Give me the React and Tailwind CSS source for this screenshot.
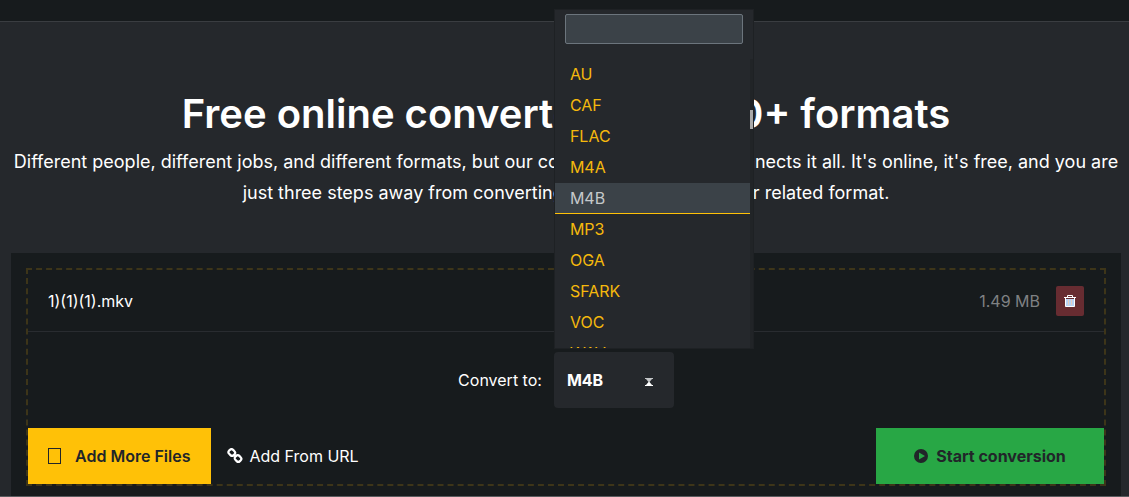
const formats = 'AU,CAF,FLAC,M4A,M4B,MP3,OGA,SFARK,VOC,WAV'.split(',');

function Hourglass() {
  return (
    <svg width="8" height="8" viewBox="0 0 8 8" aria-hidden="true">
      <path d="M0 0H8V1H7L4.500 4H3.500L1 1H0Z" fill="#c4c6c8" />
      <path d="M3.500 4H4.500L7 7H8V8H0V7H1Z" fill="#ffffff" />
    </svg>
  );
}

function TrashIcon() {
  return (
    <svg width="12" height="12" viewBox="0 0 12 12" aria-hidden="true">
      <path d="M3.500 2V0.5H8.500V2" fill="none" stroke="#fff" />
      <path d="M0 2H12V3H0Z" fill="#fff" />
      <path d="M1.500 3V11.500H10.500V3" fill="#b9d4f5" stroke="#fff" />
      <path d="M2 3.500H10" stroke="#672c31" />
      <path d="M4.500 4.500V10M7.500 4.500V10" stroke="#e6cfc0" />
    </svg>
  );
}

function LinkIcon() {
  return (
    <svg width="16" height="16" viewBox="0 0 16 16" fill="none" stroke="#fff" strokeWidth="2.2" aria-hidden="true">
      <rect x="1.600" y="1.700" width="6.400" height="5.600" rx="2.300" transform="rotate(45 4.800 4.500)" />
      <rect x="7.800" y="7.700" width="6.400" height="5.600" rx="2.300" transform="rotate(45 11 10.500)" />
      <path d="M6.500 6L9.500 9" />
    </svg>
  );
}

function PlayIcon() {
  return (
    <svg width="14" height="14" viewBox="0 0 14 14" aria-hidden="true">
      <path fillRule="evenodd" d="M7 0A7 7 0 1 0 7 14A7 7 0 1 0 7 0ZM5 3.500V10.500L11 7Z" fill="#212529" />
      <path d="M6.500 5.500V8.500L9 7Z" fill="#28a745" />
    </svg>
  );
}

function FormatMenu() {
  return (
    <div className="absolute bottom-full left-0 mb-[3px] w-[200px] border border-[#1e2124] bg-[#25282c]">
      <div className="px-[10px] pt-1">
        <input type="search" aria-label="Search formats" className="block h-[30px] w-full rounded-xs border border-[#6c757d] bg-[#3b4248] px-2 text-white outline-none" />
      </div>
      <div className="mt-[15px] flex h-[289px] overflow-hidden">
        <ul role="listbox" aria-label="Formats" className="flex-1 text-base text-[#f5b90c]">
          {formats.map((f) => (
            <li key={f} role="option" aria-selected={f === 'M4B'} className={f === 'M4B' ? 'h-[31px] border-b border-[#ffc107] bg-[#3b4248] px-[15px] leading-[30px] text-[#c5c8ca]' : 'h-[31px] px-[15px] leading-[30px]'}>
              {f}
            </li>
          ))}
        </ul>
        <div className="w-[3px] bg-[#212427] pt-[51px]">
          <div className="h-[19px] bg-[#a9a9a9]" />
        </div>
      </div>
    </div>
  );
}

export default function App() {
  return (
    <div className="overflow-hidden border-b border-[#5a5c5f] bg-[#25282c] font-['Inter',sans-serif] text-white">
      <header className="h-[22px] border-b border-[#3a3d41] bg-[#171b1d]" />
      <main className="pl-[11px] pr-2 pt-[68px]">
        <h1 className="whitespace-nowrap text-center text-[40px] font-semibold leading-[48px]">Free online converter for 1000+ formats</h1>
        <p className="mt-2 text-center text-lg leading-[31px]">
          Different people, different jobs, and different formats, but our converter of any files connects it all. It's online, it's free, and you are just three steps away from converting your file into any other related format.
        </p>
        <section className="mt-[45px] bg-[#171b1d] p-[15px] pb-[10px]">
          <div className="border-2 border-dashed border-[#3d3519]">
            <div className="flex h-[62px] items-center border-b border-[#292c30] px-5">
              <span className="flex-1">1)(1)(1).mkv</span>
              <span className="mr-4 text-[#7f8183]">1.49 MB</span>
              <button aria-label="Remove file" className="flex h-[30px] w-7 items-center justify-center rounded-xs bg-[#672c31]"><TrashIcon /></button>
            </div>
            <div className="flex h-24 items-center justify-center">
              <label htmlFor="format" className="mr-3">Convert to:</label>
              <div className="relative flex items-center">
                <select id="format" defaultValue="M4B" className="h-14 w-[120px] appearance-none rounded-sm bg-[#25282c] pl-[13px] font-bold">
                  {formats.map((f) => <option key={f}>{f}</option>)}
                </select>
                <span className="pointer-events-none absolute right-[21px] top-[26px]"><Hourglass /></span>
                <FormatMenu />
              </div>
            </div>
            <div className="flex h-14">
              <button className="flex items-center bg-[#ffc107] pl-5 pr-[21px] font-semibold text-[#212529]"><span className="mr-[14px] h-4 w-[13px] border border-[#212529]" />Add More Files</button>
              <button className="flex items-center gap-1.5 px-4"><LinkIcon />Add From URL</button>
              <button className="ml-auto flex w-[228px] items-center justify-center gap-2 bg-[#28a745] font-bold text-[#212529]"><PlayIcon />Start conversion</button>
            </div>
          </div>
        </section>
      </main>
    </div>
  );
}
